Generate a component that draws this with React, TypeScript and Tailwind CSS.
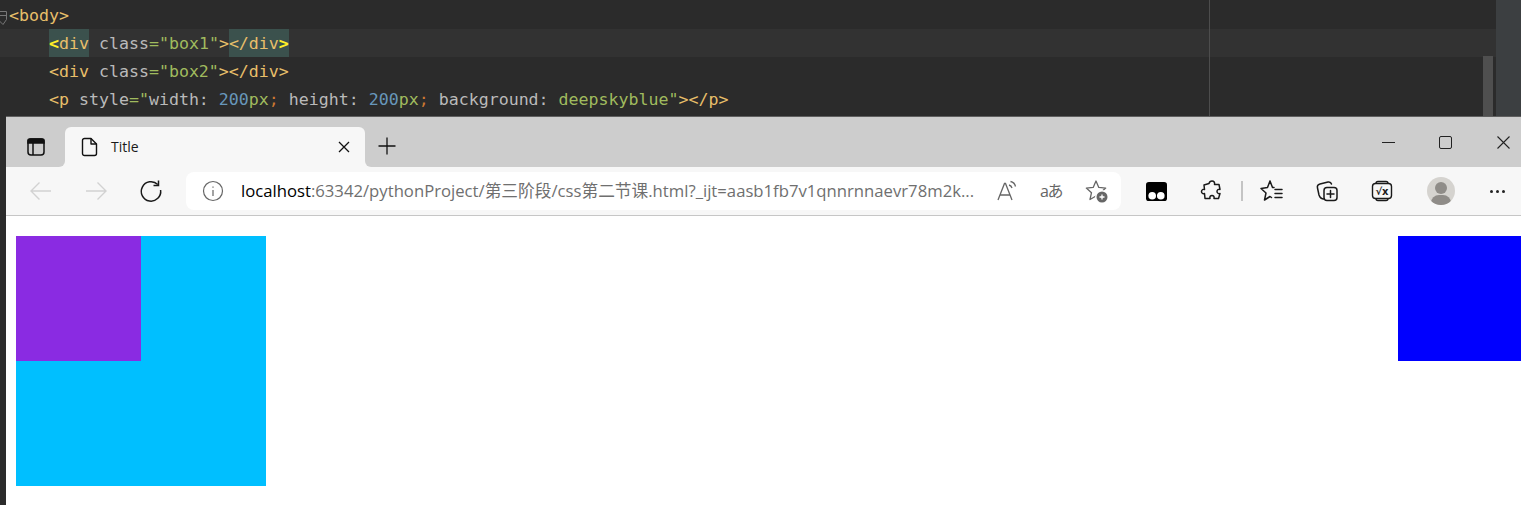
const tag = "text-[#e8bf6a]";
const attr = "text-[#bababa]";
const val = "text-[#a0bb5e]";
const num = "text-[#6897bb]";
const sep = "text-[#cc7832]";

function Line({ active, children }: { active?: boolean; children: React.ReactNode }) {
  return (
    <div className={`flex h-[28px] items-stretch whitespace-pre leading-[30px] ${active ? "bg-[#323232]" : ""}`}>
      {children}
    </div>
  );
}

function Stroke({ w = 24, children, className = "" }: { w?: number; children: React.ReactNode; className?: string }) {
  return (
    <svg width={w} height={w} viewBox="0 0 24 24" fill="none" stroke="currentColor" strokeWidth="1.5" strokeLinecap="round" strokeLinejoin="round" className={className}>
      {children}
    </svg>
  );
}

function Editor() {
  return (
    <div className="relative h-[116px] bg-[#2b2b2b] font-['DejaVu_Sans_Mono',monospace] text-[16.6px]">
      <div className="flex h-full">
        <div className="flex w-[1496px] flex-col pt-[1px]">
          <div className="pl-[9px]">
            <Line><span className={tag}>&lt;body&gt;</span></Line>
          </div>
          <Line active>
            <span className="w-[49px]" />
            <span className="bg-[#3b514d] text-[#e8bf6a]"><span className="font-bold text-[#ffef28]">&lt;</span>div</span>
            <span className={attr}> class</span>
            <span className={val}>="box1"</span>
            <span className={tag}>&gt;</span>
            <span className="bg-[#3b514d] text-[#e8bf6a]">&lt;/div<span className="font-bold text-[#ffef28]">&gt;</span></span>
          </Line>
          <Line>
            <span className="w-[49px]" />
            <span className={tag}>&lt;div</span>
            <span className={attr}> class</span>
            <span className={val}>="box2"</span>
            <span className={tag}>&gt;&lt;/div&gt;</span>
          </Line>
          <Line>
            <span className="w-[49px]" />
            <span className={tag}>&lt;p</span>
            <span className={attr}> style</span>
            <span className={val}>="</span>
            <span className={attr}>width: </span>
            <span className={num}>200</span>
            <span className={val}>px</span>
            <span className={sep}>;</span>
            <span className={attr}> height: </span>
            <span className={num}>200</span>
            <span className={val}>px</span>
            <span className={sep}>;</span>
            <span className={attr}> background: </span>
            <span className={val}>deepskyblue"</span>
            <span className={tag}>&gt;&lt;/p&gt;</span>
          </Line>
        </div>
        <div className="w-[25px] bg-[#3c3f41]" />
      </div>
      {/* margin guide, fold mark, scrollbar thumb */}
      <div className="absolute left-[1209px] top-0 h-full w-px bg-[#4d4d4d]" />
      <div className="absolute left-[1483px] top-[56px] h-[60px] w-[10px] bg-[#4f4f4f]" />
      <svg className="absolute left-0 top-[11px]" width="7" height="15" viewBox="0 0 7 15" fill="none" stroke="#777">
        <path d="M-1 .5h7.500v8l-3.500 5-4-4" />
        <path d="M0 4.500h6" />
      </svg>
    </div>
  );
}

function Toolbar() {
  return (
    <div className="flex h-[49px] items-start border-b border-[#c6c6c6] bg-[#f7f7f7] font-['Open_Sans','Noto_Sans_CJK_SC',sans-serif]">
      <div className="flex h-[48px] w-[180px] items-center text-[#1a1a1a]">
        <svg className="ml-[23px] text-[#d2d2d2]" width="24" height="24" viewBox="0 0 24 24" fill="none" stroke="currentColor" strokeWidth="1.4">
          <path d="M22 12H2M10.500 3.500 2 12l8.500 8.500" />
        </svg>
        <svg className="ml-[31px] text-[#d2d2d2]" width="24" height="24" viewBox="0 0 24 24" fill="none" stroke="currentColor" strokeWidth="1.4">
          <path d="M2 12h20M13.500 3.500 22 12l-8.500 8.500" />
        </svg>
        <svg className="ml-[31px]" width="24" height="24" viewBox="0 0 24 24" fill="none" stroke="currentColor" strokeWidth="1.5">
          <path d="M18.800 5.500A9.700 9.700 0 1 0 21.600 11" />
          <path d="M19.500 1.500v5h-5" />
        </svg>
      </div>
      <div className="mt-[5px] flex h-[38px] w-[935px] items-center rounded-[8px] bg-white">
        <svg className="ml-[16px] shrink-0 text-[#666]" width="22" height="22" viewBox="0 0 22 22" fill="none" stroke="currentColor" strokeWidth="1.2">
          <circle cx="11" cy="11" r="9.500" />
          <path d="M11 10v6M11 6.500v1.200" />
        </svg>
        <div className="ml-[17px] w-[738px] shrink-0 whitespace-nowrap text-[16.7px] text-[#6f6f6f]">
          <span className="text-black">localhost</span>:63342/pythonProject/第三阶段/css第二节课.html?_ijt=aasb1fb7v1qnnrnnaevr78m2k...
        </div>
        <div className="ml-[16px] flex items-center text-[#666]">
          <svg width="24" height="24" viewBox="0 0 24 24" fill="none" stroke="currentColor" strokeWidth="1.3">
            <path d="M3 21 9.500 4.500h1L17 21M5 16h10.500" />
            <path d="M14 6c1.600.4 2.600 1.400 3 3M15.500 2.500c2.800.6 4.400 2.200 5 5" />
          </svg>
          <span className="ml-[21px] w-[24px] whitespace-nowrap text-[16px] leading-none tracking-[-1.5px]">aあ</span>
          <svg className="ml-[21px]" width="24" height="24" viewBox="0 0 24 24" fill="none" stroke="currentColor" strokeWidth="1.3" strokeLinejoin="round">
            <path d="M11 2l2.800 6.400 6.900.7-5.200 4.600 1.500 6.800L11 17l-6 3.500 1.500-6.800L1.300 9.100l6.900-.7z" />
            <circle cx="17" cy="18" r="7" fill="#fff" stroke="none" />
            <circle cx="17" cy="18" r="5.500" fill="#666" stroke="none" />
            <path d="M17 15.500v5M14.500 18h5" stroke="#fff" strokeWidth="1.300" />
          </svg>
        </div>
      </div>
      <div className="flex h-[48px] flex-1 items-center text-[#1a1a1a]">
        <svg className="ml-[25px]" width="21" height="21" viewBox="0 0 22 22">
          <path d="M3 1h16a3 3 0 0 1 3 3v14a3 3 0 0 1-3 3H3a3 3 0 0 1-3-3V4a3 3 0 0 1 3-3z" fill="#000" />
          <circle cx="6.500" cy="15.500" r="4" fill="#fff" />
          <circle cx="15.500" cy="15.500" r="4" fill="#fff" />
        </svg>
        <Stroke w={24} className="ml-[33px]">
          <path d="M9 4.500c.5-2 1-2.500 3-2.500s3 1.500 2.500 3.500H19l1 5c-2-.5-3 .5-3 2s1.500 2.500 3 2l-1.500 5H14c.5-2-.5-3-2-3s-2.500 1-2 3H5l-.5-5c-2 .5-3-.5-3-2s1.500-2.500 3-2L4 6z" />
        </Stroke>
        <div className="ml-[17px] h-[20px] w-[2px] bg-[#c4c4c4]" />
        <Stroke w={24} className="ml-[17px]">
          <path d="M10 2 7.500 8.500 1 9.500l5 4.500L4.500 21 10 17.500l1.500 1M10 2l2.500 6.500H14" />
          <path d="M15 10.500h7M15 14.500h7M15 18.500h7" />
        </Stroke>
        <Stroke w={24} className="ml-[31px]">
          <path d="M9 20c-3 0-4-1-5-4L2.500 9c-.5-2 .5-3.500 2.500-4l8-2c1.500-.3 3 .3 3.500 2" />
          <rect x="9" y="8.500" width="13" height="13" rx="3" />
          <path d="M15.500 11.500v7M12 15h7" />
        </Stroke>
        <svg className="ml-[31px]" width="24" height="24" viewBox="0 0 24 24" fill="none" stroke="currentColor" strokeWidth="1.4">
          <path d="M6 4.500c0-1.500 1-2 2-2h8c1 0 2 .5 2 2M6 19.500c0 1.500 1 2 2 2h8c1 0 2-.5 2-2" />
          <rect x="2.500" y="4.500" width="19" height="15" rx="3" />
          <text x="12" y="16" textAnchor="middle" fontSize="10" fontWeight="700" fill="currentColor" stroke="none" fontFamily="'DejaVu Sans',sans-serif">√x</text>
        </svg>
        <div className="relative ml-[33px] h-[28px] w-[28px] overflow-hidden rounded-full bg-[#d5d3cf]">
          <div className="absolute left-[8px] top-[5px] h-[12px] w-[12px] rounded-full bg-[#8f8c88]" />
          <div className="absolute left-[4px] top-[18px] h-[16px] w-[20px] rounded-full bg-[#8f8c88]" />
        </div>
        <div className="ml-[35px] flex gap-[3px]">
          <span className="h-[3px] w-[3px] rounded-full bg-[#222]" />
          <span className="h-[3px] w-[3px] rounded-full bg-[#222]" />
          <span className="h-[3px] w-[3px] rounded-full bg-[#222]" />
        </div>
      </div>
    </div>
  );
}

function TabStrip() {
  return (
    <div className="flex h-[50px] bg-[#f7f7f7] font-['Open_Sans',sans-serif]">
      <div className="flex w-[59px] items-center justify-center rounded-br-[6px] bg-[#cdcdcd] pt-[10px]">
        <svg width="20" height="20" viewBox="0 0 20 20" fill="none" stroke="#111" strokeWidth="1.500">
          <rect x="2" y="2" width="16" height="16" rx="3" />
          <path d="M2 3.500c0-1 1-1.500 2-1.500h12c1 0 2 .5 2 1.500V6H2z" fill="#111" />
          <path d="M7 6v12" />
        </svg>
      </div>
      <div className="w-[300px] bg-[#cdcdcd]">
        <div className="mt-[10px] flex h-[40px] items-center rounded-t-[6px] bg-[#f7f7f7]">
          <svg className="ml-[16px]" width="18" height="20" viewBox="0 0 18 20" fill="none" stroke="#111" strokeWidth="1.400" strokeLinejoin="round">
            <path d="M3.500 1.500h6.500l5.500 5.500v9.500a2 2 0 0 1-2 2h-10a2 2 0 0 1-2-2v-13a2 2 0 0 1 2-2z" />
            <path d="M10 1.500V7h5.500" />
          </svg>
          <span className="ml-[12px] mb-[2px] flex-1 text-[14px] text-[#1a1a1a]">Title</span>
          <svg className="mr-[15px]" width="12" height="12" viewBox="0 0 12 12" stroke="#111" strokeWidth="1.300">
            <path d="M1 1l10 10M11 1 1 11" />
          </svg>
        </div>
      </div>
      <div className="flex flex-1 items-center rounded-bl-[6px] bg-[#cdcdcd]">
        <svg className="ml-[13px] mt-[7px]" width="18" height="18" viewBox="0 0 18 18" stroke="#111" strokeWidth="1.300">
          <path d="M9 0.500v17M0.500 9h17" />
        </svg>
        <div className="ml-auto flex items-center">
          <div className="h-px w-[13px] bg-[#222]" />
          <div className="ml-[44px] h-[13px] w-[13px] rounded-[2px] border border-[#222]" />
          <svg className="ml-[45px] mr-[11px]" width="13" height="13" viewBox="0 0 13 13" stroke="#222" strokeWidth="1.100">
            <path d="M.5.500l12 12M12.500.500l-12 12" />
          </svg>
        </div>
      </div>
    </div>
  );
}

export default function App() {
  return (
    <div className="h-[505px] w-[1521px] overflow-hidden bg-[#2b2b2b]">
      <Editor />
      <div className="ml-[6px] h-[389px] border-t border-[#5f5f5f] bg-white">
        <TabStrip />
        <Toolbar />
        <div className="flex items-start justify-between pl-[10px] pt-[20px]">
          <div className="h-[250px] w-[250px] shrink-0 bg-[#00bfff]">
            <div className="h-[125px] w-[125px] bg-[#8a2be2]" />
          </div>
          <div className="-mr-[2px] h-[125px] w-[125px] shrink-0 bg-[#0000ff]" />
        </div>
      </div>
    </div>
  );
}
